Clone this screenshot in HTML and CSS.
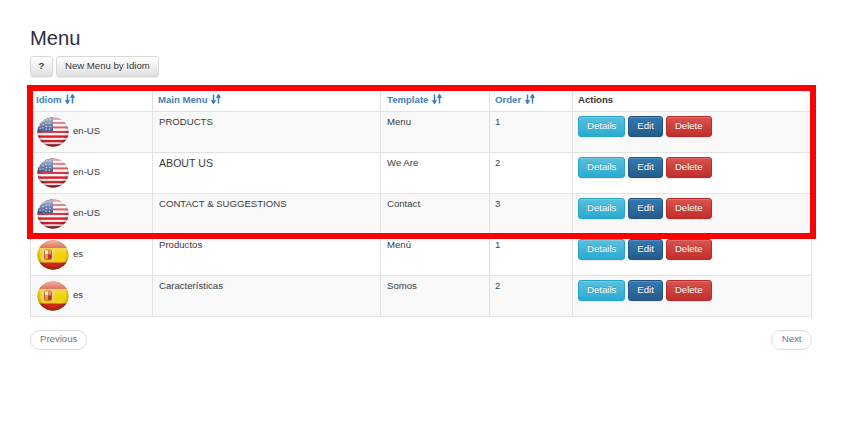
FILE: index.html
```html
<!DOCTYPE html>
<html lang="en">
<head>
<meta charset="utf-8">
<title>Menu</title>
<link rel="stylesheet" href="styles.css">
</head>
<body>
<svg class="defs" width="0" height="0" aria-hidden="true">
  <defs>
    <radialGradient id="shade" cx="50%" cy="45%" r="55%">
      <stop offset="72%" stop-color="#000" stop-opacity="0"/>
      <stop offset="100%" stop-color="#000" stop-opacity=".3"/>
    </radialGradient>
    <linearGradient id="gloss" x1="0" y1="0" x2="0" y2="1">
      <stop offset="0%" stop-color="#fff" stop-opacity=".62"/>
      <stop offset="60%" stop-color="#fff" stop-opacity=".2"/>
      <stop offset="100%" stop-color="#fff" stop-opacity="0"/>
    </linearGradient>
    <clipPath id="disc"><circle cx="16" cy="16" r="15.6"/></clipPath>
    <symbol id="flag-us" viewBox="0 0 32 32" preserveAspectRatio="none">
      <g clip-path="url(#disc)">
        <rect width="32" height="32" fill="#f6f6f6"/>
        <rect y="0" width="32" height="3" fill="#c8323c"/>
        <rect y="5.200" width="32" height="2.200" fill="#d03a44"/>
        <rect y="10" width="32" height="2.200" fill="#d03a44"/>
        <rect y="14.800" width="32" height="2.200" fill="#d42a36"/>
        <rect y="19.600" width="32" height="2.600" fill="#d8222e"/>
        <rect y="24.400" width="32" height="2.600" fill="#cc202c"/>
        <rect y="29" width="32" height="3" fill="#a81e28"/>
        <rect width="16" height="15" fill="#3a5590"/>
        <g fill="#e4e9f2">
          <circle cx="4" cy="6" r=".7"/><circle cx="7" cy="4" r=".7"/><circle cx="10" cy="3" r=".7"/><circle cx="13" cy="3" r=".7"/>
          <circle cx="2.500" cy="9" r=".7"/><circle cx="6" cy="8" r=".7"/><circle cx="9" cy="6.500" r=".7"/><circle cx="12.500" cy="6.500" r=".7"/>
          <circle cx="3" cy="12" r=".7"/><circle cx="6" cy="11.500" r=".7"/><circle cx="9.500" cy="10" r=".7"/><circle cx="13" cy="10" r=".7"/>
          <circle cx="9" cy="13" r=".7"/><circle cx="12.500" cy="13" r=".7"/>
        </g>
        <rect width="32" height="32" fill="url(#shade)"/>
        <ellipse cx="16" cy="9" rx="15" ry="9" fill="url(#gloss)"/>
      </g>
    </symbol>
    <symbol id="flag-es" viewBox="0 0 32 32" preserveAspectRatio="none">
      <g clip-path="url(#disc)">
        <rect width="32" height="32" fill="#f5d010"/>
        <rect width="32" height="8.500" fill="#d8402c"/>
        <rect y="24" width="32" height="8" fill="#cc2a1c"/>
        <rect x="7" y="10" width="8" height="11" rx="2" fill="#c9553c"/>
        <rect x="8" y="11" width="3" height="4.500" fill="#ece4cc"/>
        <rect x="11.500" y="11" width="2.500" height="4.500" fill="#d89a50"/>
        <rect x="8" y="15.500" width="3" height="4.500" fill="#e0a030"/>
        <rect x="11.500" y="15.500" width="2.500" height="4.500" fill="#b0302a"/>
        <rect x="5.500" y="10" width="1.200" height="12" fill="#d8d8c8"/>
        <rect x="15.300" y="10" width="1.200" height="12" fill="#d8d8c8"/>
        <rect width="32" height="32" fill="url(#shade)"/>
        <ellipse cx="16" cy="8" rx="15" ry="8" fill="url(#gloss)"/>
      </g>
    </symbol>
    <symbol id="sort" viewBox="0 0 10 10">
      <path d="M2.500 0.500V8M0.700 6.200L2.500 9.300L4.300 6.200M7.500 9.500V2M5.700 3.800L7.500 .7L9.300 3.800" fill="none" stroke="currentColor" stroke-width="1.500"/>
    </symbol>
  </defs>
</svg>

<main class="page">
  <h1 class="title">Menu</h1>
  <div class="toolbar">
    <a class="btn btn-default btn-help">?</a>
    <a class="btn btn-default">New Menu by Idiom</a>
  </div>

  <div class="table-wrap">
    <table class="grid">
      <colgroup>
        <col class="c-idiom"><col class="c-main"><col class="c-template"><col class="c-order"><col>
      </colgroup>
      <thead>
        <tr>
          <th><a class="sort-link">Idiom <svg class="sort-icon"><use href="#sort"/></svg></a></th>
          <th><a class="sort-link">Main Menu <svg class="sort-icon"><use href="#sort"/></svg></a></th>
          <th class="shift"><a class="sort-link">Template <svg class="sort-icon"><use href="#sort"/></svg></a></th>
          <th><a class="sort-link">Order <svg class="sort-icon"><use href="#sort"/></svg></a></th>
          <th>Actions</th>
        </tr>
      </thead>
      <tbody>
        <tr>
          <td><div class="idiom"><svg class="flag"><use href="#flag-us"/></svg><span class="lang">en-US</span></div></td>
          <td class="shift">PRODUCTS</td><td class="shift">Menu</td><td class="num">1</td>
          <td><div class="actions"><a class="btn btn-info">Details</a><a class="btn btn-primary">Edit</a><a class="btn btn-danger">Delete</a></div></td>
        </tr>
        <tr>
          <td><div class="idiom"><svg class="flag"><use href="#flag-us"/></svg><span class="lang">en-US</span></div></td>
          <td class="shift big">ABOUT US</td><td class="shift">We Are</td><td class="num">2</td>
          <td><div class="actions"><a class="btn btn-info">Details</a><a class="btn btn-primary">Edit</a><a class="btn btn-danger">Delete</a></div></td>
        </tr>
        <tr>
          <td><div class="idiom"><svg class="flag"><use href="#flag-us"/></svg><span class="lang">en-US</span></div></td>
          <td class="shift">CONTACT &amp; SUGGESTIONS</td><td class="shift">Contact</td><td class="num">3</td>
          <td><div class="actions"><a class="btn btn-info">Details</a><a class="btn btn-primary">Edit</a><a class="btn btn-danger">Delete</a></div></td>
        </tr>
        <tr>
          <td><div class="idiom"><svg class="flag"><use href="#flag-es"/></svg><span class="lang">es</span></div></td>
          <td class="shift">Productos</td><td class="shift">Menú</td><td class="num">1</td>
          <td><div class="actions"><a class="btn btn-info">Details</a><a class="btn btn-primary">Edit</a><a class="btn btn-danger">Delete</a></div></td>
        </tr>
        <tr>
          <td><div class="idiom"><svg class="flag"><use href="#flag-es"/></svg><span class="lang">es</span></div></td>
          <td class="shift">Características</td><td class="shift">Somos</td><td class="num">2</td>
          <td><div class="actions"><a class="btn btn-info">Details</a><a class="btn btn-primary">Edit</a><a class="btn btn-danger">Delete</a></div></td>
        </tr>
      </tbody>
    </table>
    <div class="highlight"></div>
  </div>

  <nav class="pager">
    <a class="pill">Previous</a>
    <a class="pill pill-next">Next</a>
  </nav>
</main>
</body>
</html>
```

FILE: styles.css
```css
* { box-sizing: border-box; }
html, body { margin: 0; padding: 0; background: #fff; }
body {
  font-family: "Liberation Sans", Arial, sans-serif;
  font-size: 9.6px;
  line-height: 1.43;
  color: #3a3a3a;
}
.defs { position: absolute; }
.page { padding: 0 51px 0 30px; }
.title {
  margin: 0;
  padding-top: 26px;
  font-size: 20.2px;
  font-weight: 400;
  line-height: 24px;
  color: #2f2f3f;
}
.toolbar { display: flex; gap: 3px; margin-top: 6px; height: 34px; align-items: flex-start; }
.btn {
  display: inline-block;
  height: 21px;
  padding: 0 8px;
  border: 1px solid transparent;
  border-radius: 3px;
  font-size: 9.6px;
  line-height: 17px;
  white-space: nowrap;
  color: #fff;
  text-shadow: 0 -1px 0 rgba(0,0,0,.2);
  box-shadow: inset 0 1px 0 rgba(255,255,255,.15), 0 1px 1px rgba(0,0,0,.075);
}
.btn-default {
  color: #333;
  text-shadow: 0 1px 0 #fff;
  background: linear-gradient(#fff, #e0e0e0);
  border-color: #d8d8d8;
}
.btn-help { font-weight: 700; width: 23px; padding: 0; text-align: center; }
.btn-info { background: linear-gradient(#5bc0de, #2aabd2); border-color: #28a4c9; }
.btn-primary { background: linear-gradient(#337ab7, #265a88); border-color: #245580; }
.btn-danger { background: linear-gradient(#d9534f, #c12e2a); border-color: #b92c28; }

.table-wrap { position: relative; }
.grid {
  width: 782px;
  border-collapse: collapse;
  table-layout: fixed;
  border: 1px solid #ddd;
}
.c-idiom { width: 122px; }
.c-main { width: 228px; }
.c-template { width: 109px; }
.c-order { width: 83px; }
.grid th, .grid td {
  border: 1px solid #e2e2e2;
  padding: 5px;
  vertical-align: top;
  text-align: left;
}
.grid th { height: 21px; padding: 2px 5px 4px; font-weight: 700; color: #333; }
.grid tbody tr { height: 41px; }
.grid tbody tr:nth-child(odd) { background: #f9f9f9; }
.grid td { padding-top: 3px; padding-bottom: 0; }
.grid .shift { padding-left: 6px; }
.sort-link { color: #3f7fb8; }
.sort-icon { width: 10px; height: 10px; margin-left: 1px; vertical-align: -1px; }
.idiom { display: flex; align-items: center; gap: 4px; height: 30px; padding-left: 1px; margin-top: 2px; }
.flag { width: 32px; height: 30px; flex: none; }
.lang { padding-bottom: 2px; }
.big { font-size: 10.6px; }
.num { color: #34495e; }
.actions { display: flex; gap: 3px; margin-top: 1px; }
.highlight {
  position: absolute;
  left: -3px;
  top: -5px;
  width: 789px;
  height: 154px;
  border: 6px solid #f00;
  pointer-events: none;
}
.pager { display: flex; justify-content: space-between; margin-top: 13px; width: 782px; }
.pill {
  display: inline-block;
  height: 20px;
  padding: 0 9px;
  border: 1px solid #ddd;
  border-radius: 10px;
  background: #fff;
  line-height: 16px;
  color: #777;
}
.pill-next { padding: 0 9.5px; color: #5f7ea8; }
```
